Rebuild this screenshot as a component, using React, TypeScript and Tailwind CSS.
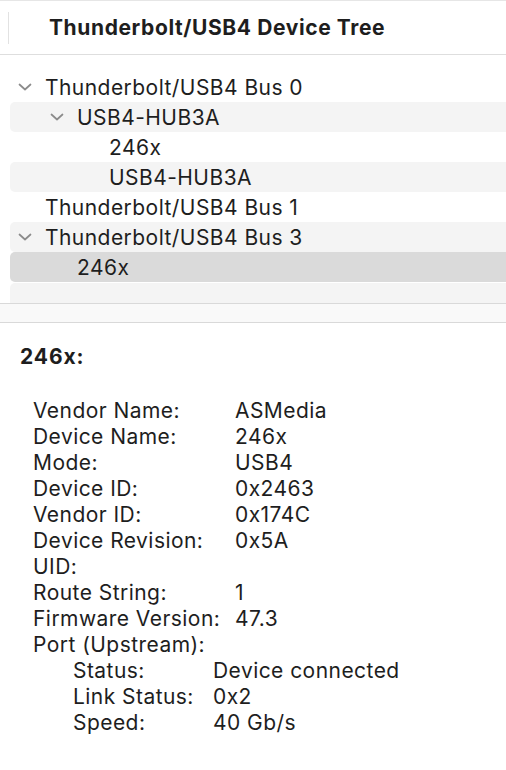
import React from 'react';

type TreeRow = {
  label: string;
  level: number;
  open?: boolean;
  stripe?: boolean;
  selected?: boolean;
};

const rows: TreeRow[] = [
  { label: 'Thunderbolt/USB4 Bus 0', level: 0, open: true },
  { label: 'USB4-HUB3A', level: 1, open: true, stripe: true },
  { label: '246x', level: 2 },
  { label: 'USB4-HUB3A', level: 2, stripe: true },
  { label: 'Thunderbolt/USB4 Bus 1', level: 0 },
  { label: 'Thunderbolt/USB4 Bus 3', level: 0, open: true, stripe: true },
  { label: '246x', level: 1, selected: true },
];

type Detail = { label: string; value?: string; sub?: boolean };

const details: Detail[] = [
  { label: 'Vendor Name:', value: 'ASMedia' },
  { label: 'Device Name:', value: '246x' },
  { label: 'Mode:', value: 'USB4' },
  { label: 'Device ID:', value: '0x2463' },
  { label: 'Vendor ID:', value: '0x174C' },
  { label: 'Device Revision:', value: '0x5A' },
  { label: 'UID:' },
  { label: 'Route String:', value: '1' },
  { label: 'Firmware Version:', value: '47.3' },
  { label: 'Port (Upstream):' },
  { label: 'Status:', value: 'Device connected', sub: true },
  { label: 'Link Status:', value: '0x2', sub: true },
  { label: 'Speed:', value: '40 Gb/s', sub: true },
];

const indent = ['pl-[8px]', 'pl-[40px]', 'pl-[72px]'];

function Chevron() {
  return (
    <svg width="14" height="8" viewBox="0 0 14 8" className="shrink-0">
      <polyline
        points="1.5,1.5 7,6.5 12.5,1.5"
        fill="none"
        stroke="#8b8b8b"
        strokeWidth="1.7"
        strokeLinecap="round"
        strokeLinejoin="round"
      />
    </svg>
  );
}

export default function App() {
  return (
    <div
      className="w-[506px] h-[770px] overflow-hidden bg-white text-[#1e1e1e] border-t border-[#e6e6e6]"
      style={{ fontFamily: 'Inter, "Liberation Sans", sans-serif' }}
    >
      {/* column header */}
      <div className="h-[54px] flex items-center border-b border-[#dedede]">
        <div className="ml-[8px] w-px h-[32px] bg-[#e2e2e2]" />
        <h1 className="ml-[40px] text-[21px] font-bold tracking-[0.6px]">Thunderbolt/USB4 Device Tree</h1>
      </div>

      {/* tree */}
      <div className="pt-[17px]">
        {rows.map((row, i) => (
          <div
            key={i}
            className={`ml-[10px] h-[30px] flex items-center rounded-l-[5px] ${indent[row.level]} ${
              row.selected ? 'bg-[#dadada]' : row.stripe ? 'bg-[#f4f4f4]' : ''
            }`}
          >
            <div className="w-[27px] flex items-center">{row.open && <Chevron />}</div>
            <span className="text-[21px] leading-none tracking-[0.45px]">{row.label}</span>
          </div>
        ))}
        <div className="ml-[10px] mt-px h-[20px] rounded-tl-[5px] bg-[#f4f4f4]" />
      </div>

      <div className="h-[20px] border-y border-[#d9d9d9] bg-[#f9f9f9]" />

      {/* details */}
      <div className="pt-[21px] pl-[20px]">
        <div className="h-[26px] flex items-center text-[21px] font-bold tracking-[0.9px]">246x:</div>
        <div className="mt-[28px] pl-[13px]">
          {details.map((d, i) => (
            <div
              key={i}
              className={`h-[26px] flex items-center text-[21px] tracking-[0.45px] ${d.sub ? 'pl-[40px]' : ''}`}
            >
              <span className={`shrink-0 ${d.sub ? 'w-[140px]' : 'w-[202px]'}`}>{d.label}</span>
              {d.value && <span className="whitespace-nowrap">{d.value}</span>}
            </div>
          ))}
        </div>
      </div>
    </div>
  );
}
